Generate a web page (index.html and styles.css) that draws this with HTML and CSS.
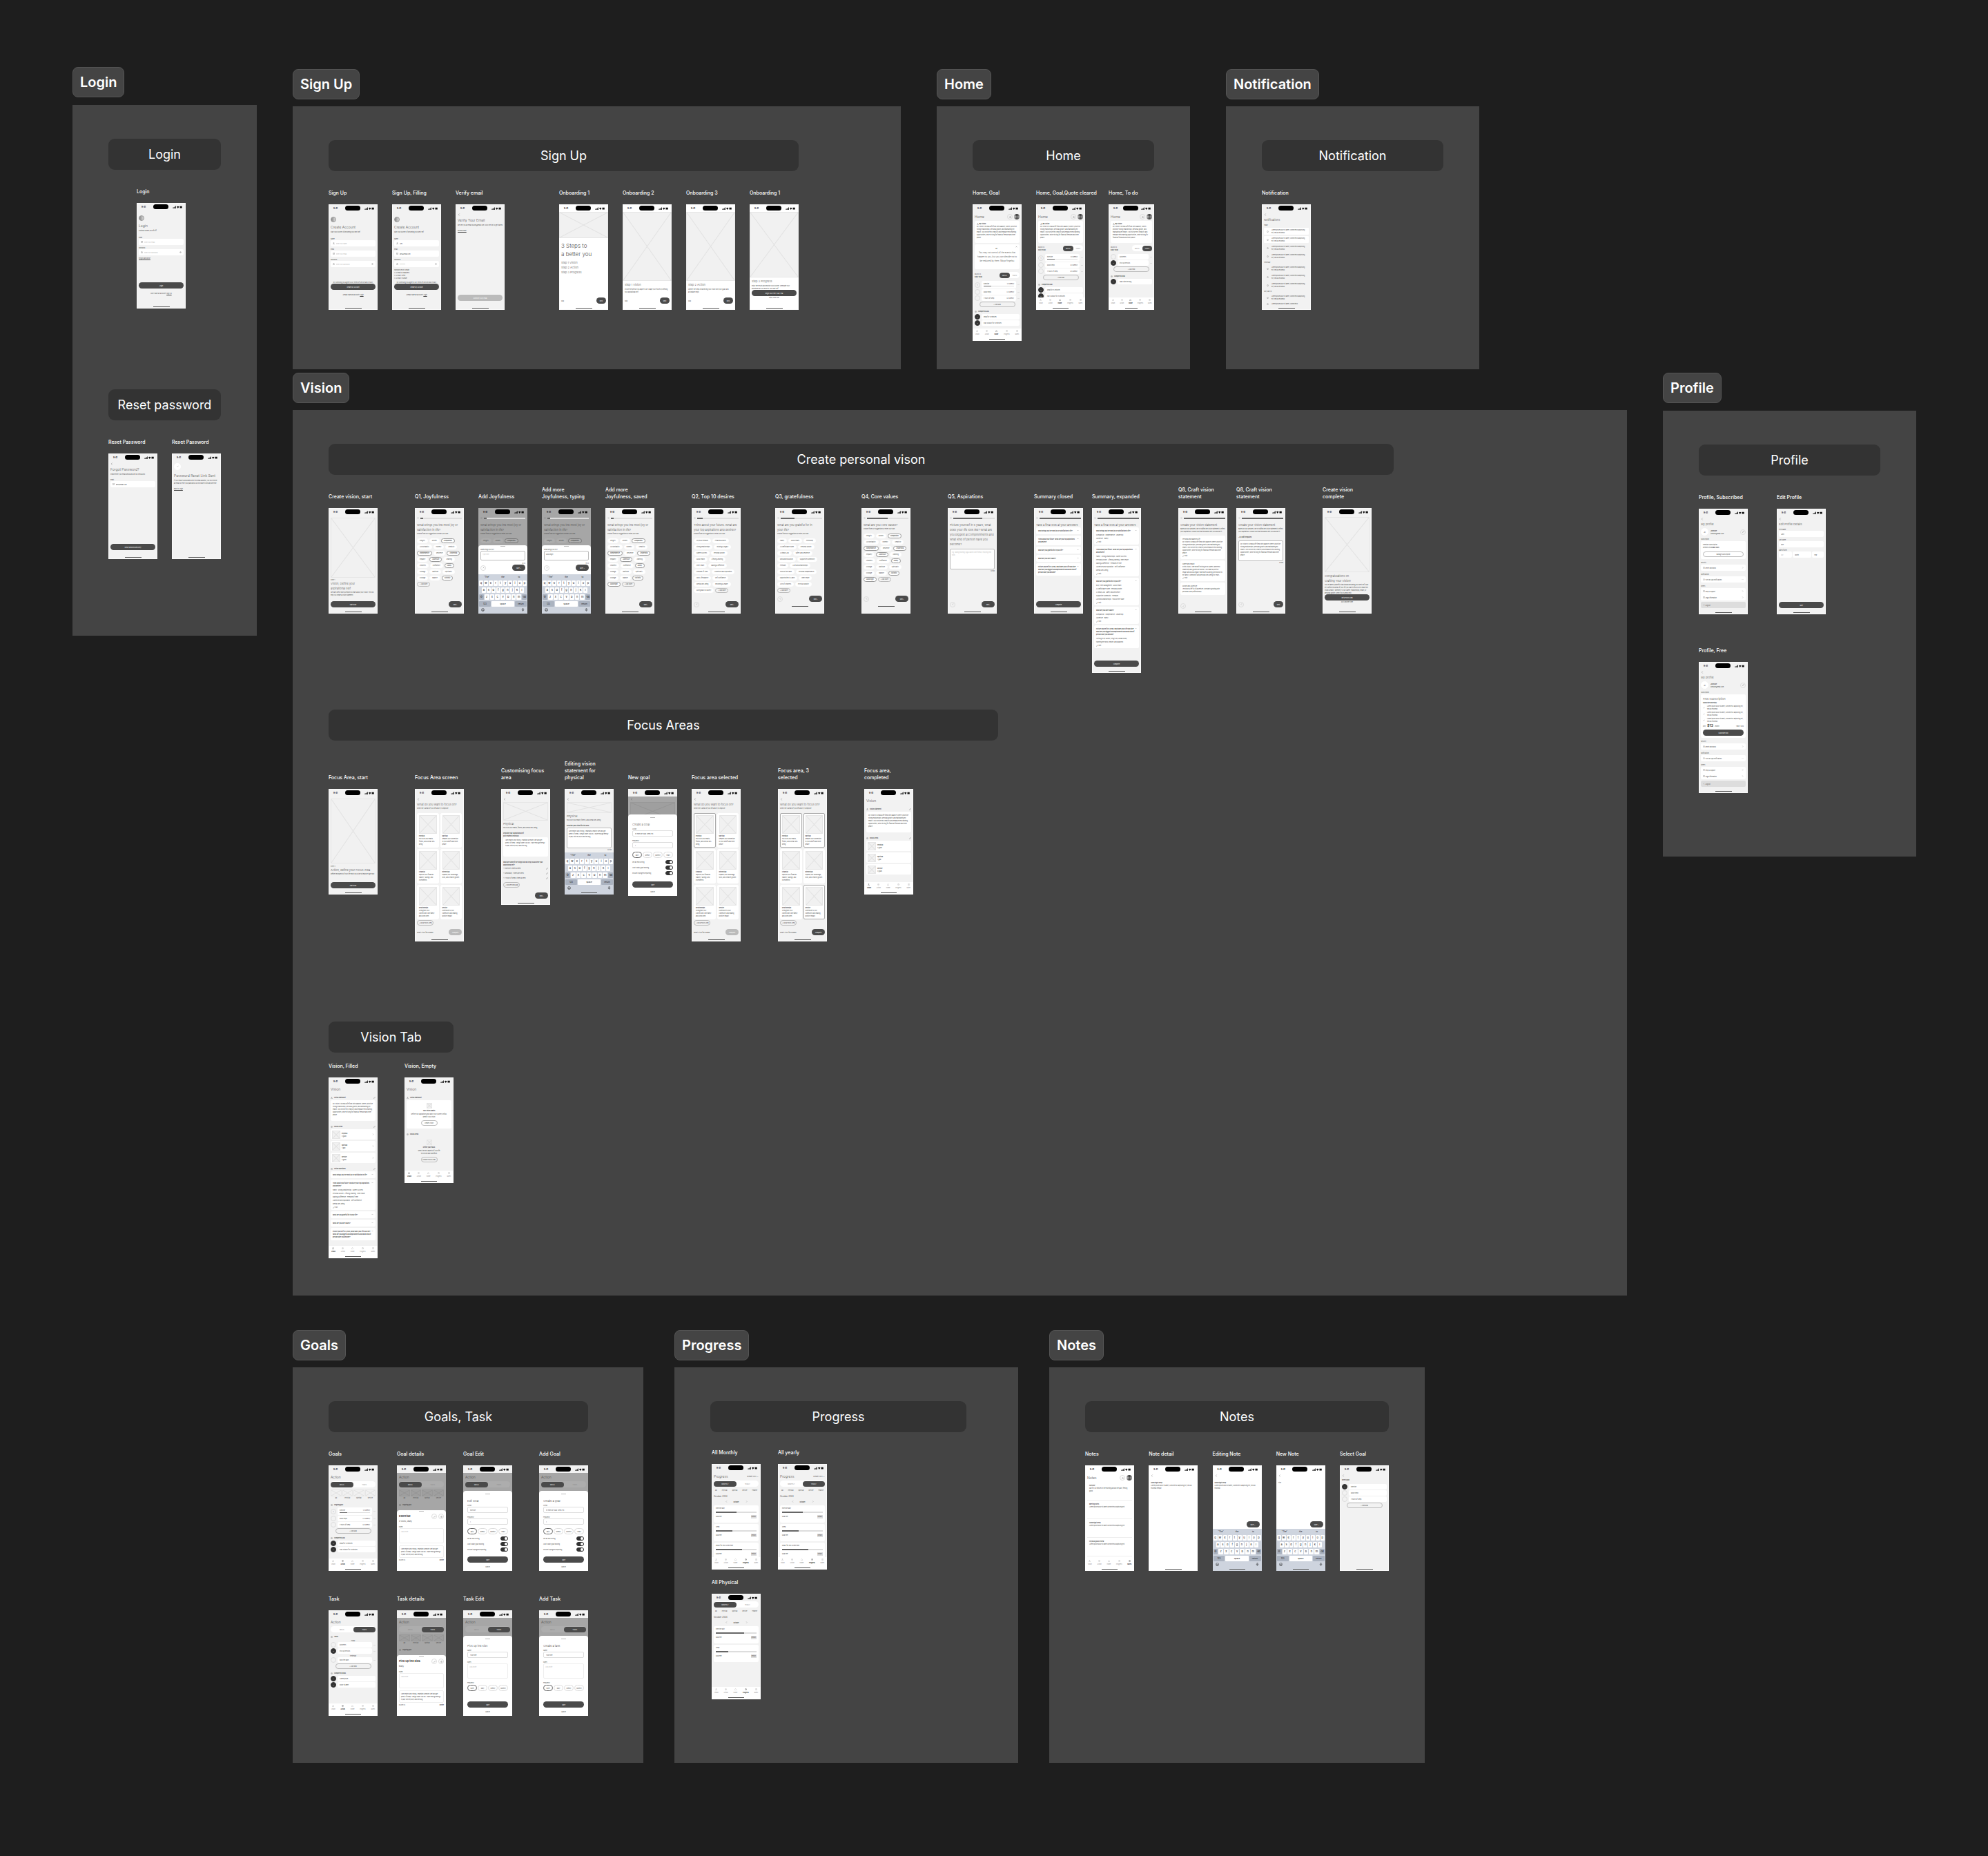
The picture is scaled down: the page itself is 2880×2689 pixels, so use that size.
FILE: index.html
```html
<!DOCTYPE html>
<html lang="en">
<head>
    <meta charset="UTF-8">
    <meta name="viewport" content="width=device-width, initial-scale=1.0">
    <title>App Wireframes</title>
    <link rel="stylesheet" href="styles.css">
</head>
<body>
    <!-- icon sprite -->
    <svg class="sprite" aria-hidden="true">
        <symbol id="i-signal" viewBox="0 0 28 8"><path fill="#111" d="M0 5h1.6v3H0zM2.4 4H4v4H2.4zM4.8 2.5h1.6V8H4.800zM7.2 1h1.6v7H7.2zM11 3.2a5.4 5.4 0 0 1 7 0L14.500 8zM20 1.500h6.500v5.500H20z"/></symbol>
        <symbol id="i-user" viewBox="0 0 24 24"><circle cx="12" cy="7" r="4"/><path d="M4 21c0-5 4-8 8-8s8 3 8 8z"/></symbol>
        <symbol id="i-mail" viewBox="0 0 24 24"><path d="M2 5h20v14H2zM2 6l10 8 10-8"/></symbol>
        <symbol id="i-lock" viewBox="0 0 24 24"><path d="M5 10h14v11H5zM8 10V6a4 4 0 0 1 8 0v4"/></symbol>
        <symbol id="i-eye" viewBox="0 0 24 24"><path d="M1 12s4-7 11-7 11 7 11 7-4 7-11 7S1 12 1 12z"/><circle cx="12" cy="12" r="3"/></symbol>
        <symbol id="i-back" viewBox="0 0 24 24"><path d="M16 3l-9 9 9 9"/></symbol>
        <symbol id="i-next" viewBox="0 0 24 24"><path d="M8 3l9 9-9 9"/></symbol>
        <symbol id="i-down" viewBox="0 0 24 24"><path d="M4 8l8 8 8-8"/></symbol>
        <symbol id="i-close" viewBox="0 0 24 24"><path d="M5 5l14 14M19 5L5 19"/></symbol>
        <symbol id="i-check" viewBox="0 0 24 24"><path d="M4 12l6 6L20 6"/></symbol>
        <symbol id="i-bell" viewBox="0 0 24 24"><path d="M5 18V11a7 7 0 0 1 14 0v7zM9 21h6"/></symbol>
        <symbol id="i-edit" viewBox="0 0 24 24"><path d="M4 20l2-6L18 2l4 4L10 18z"/></symbol>
        <symbol id="i-more" viewBox="0 0 24 24"><path d="M2 12h4M10 12h4M18 12h4"/></symbol>
        <symbol id="i-trash" viewBox="0 0 24 24"><path d="M6 7h12v14H6zM3 7h18M9 3h6"/></symbol>
        <symbol id="i-vision" viewBox="0 0 24 24"><circle cx="12" cy="5" r="3"/><path d="M3 21l6-10h5l7 10z"/></symbol>
        <symbol id="i-action" viewBox="0 0 24 24"><circle cx="12" cy="12" r="9"/><circle cx="12" cy="12" r="3"/></symbol>
        <symbol id="i-home" viewBox="0 0 24 24"><path d="M3 12l9-9 9 9v9H3z"/></symbol>
        <symbol id="i-progress" viewBox="0 0 24 24"><circle cx="12" cy="12" r="9"/><path d="M12 3v9h9"/></symbol>
        <symbol id="i-notes" viewBox="0 0 24 24"><path d="M5 3h14v18H5zM9 9h6M9 14h6"/></symbol>
        <symbol id="i-help" viewBox="0 0 24 24"><circle cx="12" cy="12" r="10"/><path d="M9 9a3 3 0 1 1 3 4v3"/></symbol>
        <symbol id="i-mic" viewBox="0 0 24 24"><path d="M9 3h6v11H9zM5 11a7 7 0 0 0 14 0M12 18v4"/></symbol>
        <symbol id="i-smile" viewBox="0 0 24 24"><circle cx="12" cy="12" r="10"/><path d="M6 13a6 6 0 0 0 12 0zM8 8h1M15 8h1"/></symbol>
    </svg>

    <main class="canvas">
        <div class="column">
            <section class="area">
                <h2 class="tag">Login</h2>
                <div class="board board-login">
                    <h3 class="bar">Login</h3>
                    <div class="row row-login">
                        <article class="frame">
                            <h4>Login</h4>
                            <div class="screen">
                                <div class="body">
                                    <i class="logo"></i>
                                    <p class="title">Login</p>
                                    <p>Continue where you left off</p>
                                    <label class="first">Email <span class="field"><svg><use href="#i-mail"/></svg><input type="email" placeholder="Enter your email"></span></label>
                                    <label>Password <span class="field"><svg><use href="#i-lock"/></svg><input type="password" placeholder="Enter your password"><svg><use href="#i-eye"/></svg></span></label>
                                    <a href="#">Forgot password?</a>
                                    <button class="btn push">Login</button>
                                    <p class="under">Don't have an account? <a href="#">Sign Up</a></p>
                                </div>
                            </div>
                        </article>
                    </div>
                    <h3 class="bar bar-next">Reset password</h3>
                    <div class="row">
                        <div class="group">
                            <article class="frame">
                                <h4>Reset Password</h4>
                                <div class="screen">
                                    <div class="body">
                                        <svg class="back"><use href="#i-back"/></svg>
                                        <p class="title">Forgot Password?</p>
                                        <p>Please enter your email below and we will send a link</p>
                                        <label class="gap-top">Email <span class="field"><svg><use href="#i-mail"/></svg><input type="email" value="alex@email.com"></span></label>
                                        <button class="btn push">Send Password Recovery</button>
                                    </div>
                                </div>
                            </article>
                            <article class="frame">
                                <h4>Reset Password</h4>
                                <div class="screen">
                                    <div class="body">
                                        <i class="done"><svg><use href="#i-check"/></svg></i>
                                        <p class="title">Password Reset Link Sent</p>
                                        <p>If your email is associated with this email address, you will receive an email to reset your password. Do not share it with anyone else.</p>
                                        <a class="gap-top" href="#">Back to Login</a>
                                    </div>
                                </div>
                            </article>
                        </div>
                    </div>
                </div>
            </section>
        </div>

        <div class="column column-main">
            <div class="areas">
                <section class="area">
                    <h2 class="tag">Sign Up</h2>
                    <div class="board board-signup">
                        <h3 class="bar">Sign Up</h3>
                        <div class="row row-split">
                            <div class="group">
                                <article class="frame">
                                    <h4>Sign Up</h4>
                                    <div class="screen">
                                        <div class="body">
                                            <i class="logo"></i>
                                            <p class="title">Create Account</p>
                                            <p>Start your journey of becoming your best self</p>
                                            <label class="first">Name <span class="field"><svg><use href="#i-user"/></svg><input type="text" placeholder="Enter your name"></span></label>
                                            <label>Email <span class="field"><svg><use href="#i-mail"/></svg><input type="email" placeholder="Enter your email"></span></label>
                                            <label>Password <span class="field"><svg><use href="#i-lock"/></svg><input type="password" placeholder="Enter your password"><svg><use href="#i-eye"/></svg></span></label>
                                            <p class="push center nowrap">By continuing you agree to our <a href="#">Terms of Service</a> and <a href="#">Privacy</a></p>
                                            <button class="btn">Create My Account</button>
                                            <p class="under">Already have an account? <a href="#">Login</a></p>
                                        </div>
                                    </div>
                                </article>
                                <article class="frame">
                                    <h4>Sign Up, Filling</h4>
                                    <div class="screen">
                                        <div class="body">
                                            <i class="logo"></i>
                                            <p class="title">Create Account</p>
                                            <p>Start your journey of becoming your best self</p>
                                            <label class="first">Name <span class="field"><svg><use href="#i-user"/></svg><input type="text" value="Alex"></span></label>
                                            <label>Email <span class="field"><svg><use href="#i-mail"/></svg><input type="email" value="alex@email.com"></span></label>
                                            <label>Password <span class="field"><svg><use href="#i-lock"/></svg><input type="text" value="********"><svg><use href="#i-eye"/></svg></span></label>
                                            <p>Password must contain<br>&#9745; At least 8 characters<br>&#9745; At least 1 letter<br>&#9745; At least 1 number</p>
                                            <p class="push center nowrap">By continuing you agree to our <a href="#">Terms of Service</a> and <a href="#">Privacy</a></p>
                                            <button class="btn">Create My Account</button>
                                            <p class="under">Already have an account? <a href="#">Login</a></p>
                                        </div>
                                    </div>
                                </article>
                                <article class="frame">
                                    <h4>Verify email</h4>
                                    <div class="screen">
                                        <div class="body">
                                            <svg class="back"><use href="#i-back"/></svg>
                                            <p class="title">Verify Your Email</p>
                                            <p>We sent you an email to alex@email.com. Click the link to get started</p>
                                            <a class="gap-top" href="#">Resend Email</a>
                                            <button class="btn btn-off push">Continue to My Email</button>
                                        </div>
                                    </div>
                                </article>
                            </div>
                            <div class="group">
                                <article class="frame">
                                    <h4>Onboarding 1</h4>
                                    <div class="screen white">
                                        <div class="photo photo-short"></div>
                                        <div class="body snug">
                                            <p class="hero">3 Steps to<br>a better you</p>
                                            <p class="steps">Step 1 Vision<br>Step 2 Action<br>Step 3 Progress</p>
                                            <div class="nav push"><a class="plain" href="#">Skip</a><button class="pill">Next</button></div>
                                        </div>
                                    </div>
                                </article>
                                <article class="frame">
                                    <h4>Onboarding 2</h4>
                                    <div class="screen white">
                                        <div class="photo photo-tall"></div>
                                        <div class="body snug">
                                            <p class="step">Step 1 Vision</p>
                                            <p>Picture the person you aspire to be. Shape your future by defining your aspirational self</p>
                                            <div class="nav push"><a class="plain" href="#">Skip</a><button class="pill">Next</button></div>
                                        </div>
                                    </div>
                                </article>
                                <article class="frame">
                                    <h4>Onboarding 3</h4>
                                    <div class="screen white">
                                        <div class="photo photo-tall"></div>
                                        <div class="body snug">
                                            <p class="step">Step 2 Action</p>
                                            <p>Identify the steps of achieving your vision with your goals and actionable steps</p>
                                            <div class="nav push"><a class="plain" href="#">Skip</a><button class="pill">Next</button></div>
                                        </div>
                                    </div>
                                </article>
                                <article class="frame">
                                    <h4>Onboarding 1</h4>
                                    <div class="screen white">
                                        <div class="photo photo-mid"></div>
                                        <div class="body snug">
                                            <p class="step">Step 3 Progress</p>
                                            <p>Enjoy the results and monitor your journey. Celebrate your milestones as you move to your best self</p>
                                            <button class="btn">Begin Your Free 7 Day Trial</button>
                                            <p class="center">Enjoy Free user</p>
                                        </div>
                                    </div>
                                </article>
                            </div>
                        </div>
                    </div>
                </section>

                <section class="area">
                    <h2 class="tag">Home</h2>
                    <div class="board board-home">
                        <h3 class="bar">Home</h3>
                        <div class="row">
                            <div class="group">
                                <article class="frame">
                                    <h4>Home, Goal</h4>
                                    <div class="screen screen-198" data-tab="Home">
                                        <div class="body">
                                            <div class="head"><p class="title">Home</p><i class="round"><svg><use href="#i-bell"/></svg></i><i class="avatar"></i></div>
                                            <div class="card vision"><b><svg><use href="#i-vision"/></svg> My Vision</b><p data-text="vision"></p></div>
                                            <div class="card quote"><svg><use href="#i-close"/></svg><i>&ldquo;</i><p>You may not control all the events that happen to you, but you can decide not to be reduced by them. Maya Angelou</p></div>
                                            <div class="day"><p>06/03/24<br><b>Daily To do</b></p><div class="switch"><button class="on">GOALS</button><button>TASKS</button></div></div>
                                            <div data-list="goals"></div>
                                        </div>
                                    </div>
                                </article>
                                <article class="frame">
                                    <h4>Home, Goal,Quote cleared</h4>
                                    <div class="screen" data-tab="Home">
                                        <div class="body">
                                            <div class="head"><p class="title">Home</p><i class="round"><svg><use href="#i-bell"/></svg></i><i class="avatar"></i></div>
                                            <div class="card vision"><b><svg><use href="#i-vision"/></svg> My Vision</b><p data-text="vision"></p></div>
                                            <div class="day"><p>06/03/24<br><b>Daily To do</b></p><div class="switch"><button class="on">GOALS</button><button>TASKS</button></div></div>
                                            <div data-list="goals"></div>
                                        </div>
                                    </div>
                                </article>
                            </div>
                            <article class="frame frame-todo">
                                <h4>Home, To do</h4>
                                <div class="screen" data-tab="Home">
                                    <div class="body">
                                        <div class="head"><p class="title">Home</p><i class="round"><svg><use href="#i-bell"/></svg></i><i class="avatar"></i></div>
                                        <div class="card vision"><b><svg><use href="#i-vision"/></svg> My Vision</b><p data-text="vision"></p></div>
                                        <div class="day"><p>06/03/24<br><b>Daily To do</b></p><div class="switch"><button>GOALS</button><button class="on">TASKS</button></div></div>
                                        <ul class="todo">
                                            <li><i></i><span>Groceries</span><svg><use href="#i-more"/></svg></li>
                                            <li class="ok"><i></i><span>Pick up the kids</span><svg><use href="#i-more"/></svg></li>
                                        </ul>
                                        <button class="add">+ Add Task</button>
                                        <b class="sub"><svg><use href="#i-action"/></svg> Completed Task</b>
                                        <ul class="todo wide">
                                            <li class="ok"><i></i><span>Walk with the dog</span></li>
                                        </ul>
                                    </div>
                                </div>
                            </article>
                        </div>
                    </div>
                </section>

                <section class="area">
                    <h2 class="tag">Notification</h2>
                    <div class="board board-home">
                        <h3 class="bar">Notification</h3>
                        <div class="row">
                            <article class="frame">
                                <h4>Notification</h4>
                                <div class="screen">
                                    <div class="body clip">
                                        <svg class="back"><use href="#i-back"/></svg>
                                        <p class="step step-page">Notifications</p>
                                        <ul class="alerts">
                                            <li class="day-name">Today</li>
                                            <li class="new"><svg><use href="#i-bell"/></svg>Lorem ipsum dolor sit amet, consectetur adipiscing elit, sed do eiusmod</li>
                                            <li class="new"><svg><use href="#i-bell"/></svg>Lorem ipsum dolor sit amet, consectetur adipiscing elit, sed do eiusmod</li>
                                            <li><svg><use href="#i-bell"/></svg>Lorem ipsum dolor sit amet, consectetur adipiscing elit, sed do eiusmod</li>
                                            <li><svg><use href="#i-bell"/></svg>Lorem ipsum dolor sit amet, consectetur adipiscing elit, sed do eiusmod</li>
                                            <li class="day-name">Yesterday</li>
                                            <li><svg><use href="#i-bell"/></svg>Lorem ipsum dolor sit amet, consectetur adipiscing elit, sed do eiusmod</li>
                                            <li><svg><use href="#i-bell"/></svg>Lorem ipsum dolor sit amet, consectetur adipiscing elit, sed do eiusmod</li>
                                            <li><svg><use href="#i-bell"/></svg>Lorem ipsum dolor sit amet, consectetur adipiscing elit, sed do eiusmod</li>
                                            <li class="day-name">Sun, Mar 24</li>
                                            <li><svg><use href="#i-bell"/></svg>Lorem ipsum dolor sit amet, consectetur adipiscing elit, sed do eiusmod</li>
                                            <li class="last"><svg><use href="#i-bell"/></svg>Lorem ipsum dolor sit amet, consectetur</li>
                                        </ul>
                                    </div>
                                </div>
                            </article>
                        </div>
                    </div>
                </section>
            </div>

            <section class="area area-vision">
                <h2 class="tag">Vision</h2>
                <div class="board board-vision">
                    <h3 class="bar bar-create">Create personal vison</h3>
                    <div class="row row-two">
                        <article class="frame">
                            <h4>Create vision, start</h4>
                            <div class="screen">
                                <div class="body snug">
                                    <div class="photo photo-box"></div>
                                    <p>STEP 1</p>
                                    <p class="question">Vision, Define your<br>aspirational self</p>
                                    <p>We have a few short questions to learn about your vision. This will help you create a vision statement.</p>
                                    <button class="btn push">Start Now</button>
                                </div>
                            </div>
                        </article>
                        <div class="group">
                            <article class="frame">
                                <h4>Q1, Joyfulness</h4>
                                <div class="screen">
                                    <div class="body snug">
                                        <div class="track"><svg><use href="#i-close"/></svg><progress max="100" value="6"></progress></div>
                                        <p class="question">What brings you the most joy or satisfaction in life?</p>
                                        <p>Choose from our suggestions or enter your own</p>
                                        <ul class="chips" data-set="values"></ul>
                                        <div class="nav push"><span></span><button class="pill pill-wide">Next &rsaquo;</button></div>
                                    </div>
                                </div>
                            </article>
                            <article class="frame">
                                <h4>Add Joyfulness</h4>
                                <div class="screen dim">
                                    <div class="body clip">
                                        <div class="track"><svg><use href="#i-close"/></svg><progress max="100" value="6"></progress></div>
                                        <p class="question">What brings you the most joy or satisfaction in life?</p>
                                        <p>Choose from our suggestions or enter your own</p>
                                        <ul class="chips"><li>Integrity</li><li>Growth</li><li class="on">Compassion</li></ul>
                                    </div>
                                    <div class="sheet sheet-add">
                                        <i class="grip"></i>
                                        <label>What brings you joy? <textarea placeholder="Type here"></textarea></label>
                                        <p class="right">0/24</p>
                                        <div class="nav"><i class="round"><svg><use href="#i-close"/></svg></i><button class="pill pill-wide">Save &#10003;</button></div>
                                    </div>
                                    <div class="keyboard"></div>
                                </div>
                            </article>
                            <article class="frame">
                                <h4>Add more<br>Joyfulness, typing</h4>
                                <div class="screen dim">
                                    <div class="body clip">
                                        <div class="track"><svg><use href="#i-close"/></svg><progress max="100" value="6"></progress></div>
                                        <p class="question">What brings you the most joy or satisfaction in life?</p>
                                        <p>Choose from our suggestions or enter your own</p>
                                        <ul class="chips"><li>Integrity</li><li>Growth</li><li class="on">Compassion</li></ul>
                                    </div>
                                    <div class="sheet sheet-add">
                                        <i class="grip"></i>
                                        <label>What brings you joy? <textarea>Good night</textarea></label>
                                        <p class="right">9/24</p>
                                        <div class="nav"><i class="round"><svg><use href="#i-close"/></svg></i><button class="pill pill-wide">Save &#10003;</button></div>
                                    </div>
                                    <div class="keyboard"></div>
                                </div>
                            </article>
                            <article class="frame">
                                <h4>Add more<br>Joyfulness, saved</h4>
                                <div class="screen">
                                    <div class="body snug">
                                        <div class="track"><svg><use href="#i-close"/></svg><progress max="100" value="6"></progress></div>
                                        <p class="question">What brings you the most joy or satisfaction in life?</p>
                                        <p>Choose from our suggestions or enter your own</p>
                                        <ul class="chips" data-set="values" data-extra="Good night"></ul>
                                        <div class="nav push"><span></span><button class="pill pill-wide">Next &rsaquo;</button></div>
                                    </div>
                                </div>
                            </article>
                        </div>
                        <div class="group group-50">
                            <article class="frame">
                                <h4>Q2, Top 10 desires</h4>
                                <div class="screen">
                                    <div class="body snug">
                                        <div class="track"><svg><use href="#i-close"/></svg><progress max="100" value="14"></progress></div>
                                        <p class="question">Think about your future. What are your top aspirations and desires?</p>
                                        <p>Choose from our suggestions or enter your own</p>
                                        <ul class="chips chips-wide" data-set="desires"></ul>
                                        <div class="nav push"><i class="round"><svg><use href="#i-back"/></svg></i><button class="pill pill-wide">Next &rsaquo;</button></div>
                                    </div>
                                </div>
                            </article>
                            <article class="frame">
                                <h4>Q3, gratefulness</h4>
                                <div class="screen raised">
                                    <div class="body snug">
                                        <div class="track"><svg><use href="#i-close"/></svg><progress max="100" value="33"></progress></div>
                                        <p class="question">What are you grateful for in<br>your life?</p>
                                        <p>Choose from our suggestions or enter your own</p>
                                        <ul class="chips" data-set="grateful"></ul>
                                        <div class="nav push"><i class="round"><svg><use href="#i-back"/></svg></i><button class="pill pill-wide">Next &rsaquo;</button></div>
                                    </div>
                                </div>
                            </article>
                        </div>
                        <article class="frame">
                            <h4>Q4, Core values</h4>
                            <div class="screen raised">
                                <div class="body snug">
                                    <div class="track"><svg><use href="#i-close"/></svg><progress max="100" value="50"></progress></div>
                                    <p class="question">What are you core values?</p>
                                    <p>Choose from our suggestions or enter your own</p>
                                    <ul class="chips" data-set="values" data-extra="Good night"></ul>
                                    <div class="nav push"><i class="round"><svg><use href="#i-back"/></svg></i><button class="pill pill-wide">Next &rsaquo;</button></div>
                                </div>
                            </div>
                        </article>
                        <article class="frame">
                            <h4>Q5, Aspirations</h4>
                            <div class="screen">
                                <div class="body snug">
                                    <div class="track"><svg><use href="#i-close"/></svg><progress max="100" value="70"></progress></div>
                                    <p class="question">Picture yourself in 5 years, what does your life look like? What are you biggest accomplishments and what kind of person have you become?</p>
                                    <textarea class="essay" aria-label="Answer" placeholder="E.g. Taking morning yoga classes with friends, enjoying new skills"></textarea>
                                    <p class="right">0/500</p>
                                    <div class="nav push"><i class="round"><svg><use href="#i-back"/></svg></i><button class="pill pill-wide">Next &rsaquo;</button></div>
                                </div>
                            </div>
                        </article>
                        <div class="group group-14">
                            <article class="frame">
                                <h4>Summary closed</h4>
                                <div class="screen">
                                    <div class="body snug">
                                        <div class="track"><svg><use href="#i-close"/></svg><progress max="100" value="100"></progress></div>
                                        <p class="question">Take a final look at your answers</p>
                                        <div data-answers=""></div>
                                        <button class="btn push">Complete</button>
                                    </div>
                                </div>
                            </article>
                            <article class="frame">
                                <h4>Summary, expanded</h4>
                                <div class="screen screen-239">
                                    <div class="body snug">
                                        <div class="track"><svg><use href="#i-close"/></svg><progress max="100" value="100"></progress></div>
                                        <p class="question">Take a final look at your answers</p>
                                        <div data-answers="0 1 2 3 4"></div>
                                        <button class="btn push">Complete</button>
                                    </div>
                                </div>
                            </article>
                        </div>
                        <div class="group group-14">
                            <article class="frame">
                                <h4>Q8, Craft vision<br>statement</h4>
                                <div class="screen">
                                    <div class="body snug clip">
                                        <div class="track"><svg><use href="#i-close"/></svg><progress max="100" value="100"></progress></div>
                                        <p class="question">Create your vision statement</p>
                                        <p>Based on your answers, we've crafted the vision statement to reflect your aspirations. Choose one that resonates with you and edit it.</p>
                                        <div class="stack">
                                            <div class="card"><em>Personal and Balanced Life</em><p data-text="vision"></p><p><svg><use href="#i-edit"/></svg> Edit</p></div>
                                            <div class="card"><em>Career and Impact</em><p>In this vision, I see myself thriving in my career, where my leadership and growth are valued. I will make a positive impact and build a legacy that leaves a lasting contribution to my family, community and personal well-being for years.</p><p><svg><use href="#i-edit"/></svg> Edit</p></div>
                                            <div class="card"><em>Growth and Adventure</em><p>I envision a life full of adventure, constantly growing both personally and professionally.</p></div>
                                        </div>
                                        <div class="nav push"><i class="round"><svg><use href="#i-back"/></svg></i></div>
                                    </div>
                                </div>
                            </article>
                            <article class="frame">
                                <h4>Q8, Craft vision<br>statement</h4>
                                <div class="screen">
                                    <div class="body snug">
                                        <div class="track"><svg><use href="#i-close"/></svg><progress max="100" value="100"></progress></div>
                                        <p class="question">Create your vision statement</p>
                                        <p>Based on your answers, we've crafted the vision statement to reflect your aspirations. Choose one that resonates with you and edit it.</p>
                                        <p class="gap-top"><b>&lsaquo; All draft templates</b></p>
                                        <textarea class="essay" aria-label="Vision" data-text="vision"></textarea>
                                        <p class="right">0/500</p>
                                        <div class="nav push"><i class="round"><svg><use href="#i-back"/></svg></i><button class="pill">Next</button></div>
                                    </div>
                                </div>
                            </article>
                        </div>
                        <article class="frame">
                            <h4>Create vision<br>complete</h4>
                            <div class="screen">
                                <div class="body snug">
                                    <div class="photo photo-done"></div>
                                    <p class="question">Congratulations on<br>Crafting Your Vision!</p>
                                    <p>You've taken a powerful step toward becoming your best self. Now let's define the areas of your life you want to focus on to make this vision a reality, whether it's your career, relationships, health, or personal growth. Select focus areas next.</p>
                                    <button class="btn">Set a Focus Area</button>
                                    <p class="center">Do it another time</p>
                                </div>
                            </div>
                        </article>
                    </div>

                    <h3 class="bar bar-focus">Focus Areas</h3>
                    <div class="row row-three">
                        <article class="frame">
                            <h4>Focus Area, start</h4>
                            <div class="screen">
                                <div class="body snug">
                                    <div class="photo photo-start"></div>
                                    <p>STEP 2</p>
                                    <p class="question nowrap-text">Action, define your Focus Area</p>
                                    <p>Define the aspects of your life most you'd like to improve right now</p>
                                    <button class="btn push">Start Now</button>
                                </div>
                            </div>
                        </article>
                        <article class="frame">
                            <h4>Focus Area screen</h4>
                            <div class="screen screen-220" data-focus=""></div>
                        </article>
                        <div class="group">
                            <article class="frame">
                                <h4>Customising focus<br>area</h4>
                                <div class="screen screen-168">
                                    <div class="body snug">
                                        <svg class="back"><use href="#i-back"/></svg>
                                        <div class="photo photo-thumb"></div>
                                        <p class="question">Physical</p>
                                        <p>Focus on your health, fitness, and overall well-being</p>
                                        <p class="gap-top"><b>Describe your aspirational self<br>as it relates to Physical</b></p>
                                        <div class="card note" data-text="physical"></div>
                                        <p class="gap-top"><b>What are some of the things that will help you achieve your aspirational self?</b></p>
                                        <ul class="steps-list"><li><span>&#9744; Exercise 3 times a week</span><svg><use href="#i-edit"/></svg></li><li><span>&#9744; Meditation, 7 times per week</span><svg><use href="#i-edit"/></svg></li><li><span>&#9744; 7 hours of sleep 5 times a week</span><svg><use href="#i-edit"/></svg></li></ul>
                                        <button class="add add-small">+ Add personal goal</button>
                                        <div class="nav push"><span></span><button class="pill pill-wide">Next &rsaquo;</button></div>
                                    </div>
                                </div>
                            </article>
                            <article class="frame">
                                <h4>Editing vision<br>statement for<br>physical</h4>
                                <div class="screen keyed">
                                    <div class="body clip">
                                        <svg class="back"><use href="#i-back"/></svg>
                                        <div class="photo photo-slim"></div>
                                        <p class="question">Physical</p>
                                        <p>Focus on your health, fitness, and overall well-being</p>
                                        <p class="gap-top"><b>Describe your vision for this area</b></p>
                                        <textarea class="essay essay-tight" aria-label="Vision" data-text="physical"></textarea>
                                        <p class="right">0/200</p>
                                    </div>
                                    <div class="keyboard"></div>
                                </div>
                            </article>
                            <article class="frame">
                                <h4>New goal</h4>
                                <div class="screen screen-155 dim lit">
                                    <div class="body clip">
                                        <svg class="back"><use href="#i-back"/></svg>
                                        <div class="photo photo-thumb"></div>
                                    </div>
                                    <div class="sheet sheet-goal" data-form="Create a Goal" data-value="ie: exercise, walk, sleep, etc."></div>
                                </div>
                            </article>
                            <article class="frame">
                                <h4>Focus area selected</h4>
                                <div class="screen screen-220" data-focus="Physical"></div>
                            </article>
                        </div>
                        <article class="frame">
                            <h4>Focus area, 3<br>selected</h4>
                            <div class="screen screen-220" data-focus="Physical Spiritual Service"></div>
                        </article>
                        <article class="frame">
                            <h4>Focus area,<br>completed</h4>
                            <div class="screen" data-tab="Vision">
                                <div class="body">
                                    <p class="title title-top">Vision</p>
                                    <b class="sub"><svg><use href="#i-vision"/></svg> Vision Statement <svg><use href="#i-edit"/></svg></b>
                                    <div class="card vision"><p data-text="vision"></p></div>
                                    <b class="sub"><svg><use href="#i-action"/></svg> Focus Areas <svg><use href="#i-edit"/></svg></b>
                                    <div class="card focus"><i class="photo"></i><p><b>Physical</b><br>3 goals</p></div>
                                    <div class="card focus"><i class="photo"></i><p><b>Spiritual</b><br>1 goal</p></div>
                                    <div class="card focus"><i class="photo"></i><p><b>Service</b><br>3 goals</p></div>
                                </div>
                            </div>
                        </article>
                    </div>

                    <h3 class="bar bar-tab">Vision Tab</h3>
                    <div class="row row-near">
                        <article class="frame">
                            <h4>Vision, Filled</h4>
                            <div class="screen screen-262" data-tab="Vision">
                                <div class="body">
                                    <p class="title title-top">Vision</p>
                                    <b class="sub"><svg><use href="#i-vision"/></svg> Vision Statement <svg><use href="#i-edit"/></svg></b>
                                    <div class="card vision"><p data-text="vision"></p></div>
                                    <b class="sub"><svg><use href="#i-action"/></svg> Focus Areas <svg><use href="#i-edit"/></svg></b>
                                    <div class="card focus"><i class="photo"></i><p><b>Physical</b><br>3 goals</p><svg><use href="#i-next"/></svg></div>
                                    <div class="card focus"><i class="photo"></i><p><b>Spiritual</b><br>1 goal</p><svg><use href="#i-next"/></svg></div>
                                    <div class="card focus"><i class="photo"></i><p><b>Service</b><br>3 goals</p><svg><use href="#i-next"/></svg></div>
                                    <b class="sub"><svg><use href="#i-help"/></svg> Vision Questions <svg><use href="#i-edit"/></svg></b>
                                    <div data-answers="1"></div>
                                </div>
                            </div>
                        </article>
                        <article class="frame">
                            <h4>Vision, Empty</h4>
                            <div class="screen" data-tab="Vision">
                                <div class="body">
                                    <p class="title title-top">Vision</p>
                                    <b class="sub"><svg><use href="#i-vision"/></svg> Vision Statement</b>
                                    <div class="card empty"><i class="photo"></i><b>Your vision awaits</b><p>Define your aspirations and watch your journey unfold. Identify your vision</p><button class="add add-small">Create Vision</button></div>
                                    <b class="sub"><svg><use href="#i-action"/></svg> Focus Areas</b>
                                    <div class="empty"><i class="photo"></i><b>Define your focus</b><p>Select the key aspects of your life<br>to nurture and transform</p><button class="add add-small">Choose Focus Area</button></div>
                                </div>
                            </div>
                        </article>
                    </div>
                </div>
            </section>

            <div class="areas areas-last">
                <section class="area">
                    <h2 class="tag">Goals</h2>
                    <div class="board board-goals">
                        <h3 class="bar">Goals, Task</h3>
                        <div class="row row-goals">
                            <article class="frame">
                                <h4>Goals</h4>
                                <div class="screen" data-tab="Action">
                                    <div class="body">
                                        <p class="title title-top">Action</p>
                                        <div class="switch switch-full"><button class="on">GOALS</button><button>TASKS</button></div>
                                        <div class="thumbs"><p><i class="photo"></i><b>All</b></p><p><i class="photo"></i>Physical</p><p><i class="photo"></i>Spiritual</p><p><i class="photo"></i>Service</p></div>
                                        <b class="sub sub-flush"><svg><use href="#i-notes"/></svg> Ongoing goal</b>
                                        <div data-list="goals"></div>
                                    </div>
                                </div>
                            </article>
                            <article class="frame">
                                <h4>Goal details</h4>
                                <div class="screen dim lit">
                                    <div class="body clip">
                                        <p class="title title-top">Action</p>
                                        <div class="switch switch-full"><button class="on">GOALS</button><button>TASKS</button></div>
                                        <div class="thumbs"><p><i class="photo"></i><b>All</b></p><p><i class="photo"></i>Physical</p><p><i class="photo"></i>Spiritual</p><p><i class="photo"></i>Service</p></div>
                                        <b class="sub sub-flush"><svg><use href="#i-notes"/></svg> Ongoing goal</b>
                                    </div>
                                    <div class="sheet sheet-details">
                                        <i class="grip"></i>
                                        <div class="head"><b>Exercise</b><i class="round"><svg><use href="#i-edit"/></svg></i><i class="round"><svg><use href="#i-trash"/></svg></i></div>
                                        <p class="schedule">2 times, daily</p>
                                        <label>Notes <textarea placeholder="Add a note"></textarea></label>
                                        <p class="boxed" data-text="physical"></p>
                                        <div class="nav"><span>04/09/24</span><b>Delete</b></div>
                                    </div>
                                </div>
                            </article>
                            <article class="frame">
                                <h4>Goal Edit</h4>
                                <div class="screen dim lit">
                                    <div class="body clip">
                                        <p class="title title-top">Action</p>
                                        <div class="switch switch-full"><button class="on">GOALS</button><button>TASKS</button></div>
                                    </div>
                                    <div class="sheet sheet-goal" data-form="Edit Goal" data-value="Exercise"></div>
                                </div>
                            </article>
                            <article class="frame">
                                <h4>Add Goal</h4>
                                <div class="screen dim lit">
                                    <div class="body clip">
                                        <p class="title title-top">Action</p>
                                        <div class="switch switch-full"><button class="on">GOALS</button><button>TASKS</button></div>
                                    </div>
                                    <div class="sheet sheet-goal" data-form="Create a goal" data-value="ie: exercise, walk, sleep, etc."></div>
                                </div>
                            </article>
                        </div>
                        <div class="row row-goals row-second">
                            <article class="frame">
                                <h4>Task</h4>
                                <div class="screen" data-tab="Action">
                                    <div class="body">
                                        <p class="title title-top">Action</p>
                                        <div class="switch switch-full"><button>GOALS</button><button class="on">TASKS</button></div>
                                        <b class="sub"><svg><use href="#i-notes"/></svg> Tasks</b>
                                        <p class="center">Today</p>
                                        <ul class="todo">
                                            <li><i></i><span>Groceries</span><svg><use href="#i-more"/></svg></li>
                                            <li class="ok"><i></i><span>Pick up the kids</span><svg><use href="#i-more"/></svg></li>
                                        </ul>
                                        <p class="center">Yesterday</p>
                                        <ul class="todo">
                                            <li><i></i><span>Mow the lawn</span><svg><use href="#i-more"/></svg></li>
                                        </ul>
                                        <button class="add">+ Add Task</button>
                                        <b class="sub"><svg><use href="#i-action"/></svg> Completed Tasks</b>
                                        <ul class="todo wide">
                                            <li class="ok"><i></i><span>Lorem ipsum</span></li>
                                            <li class="ok"><i></i><span>Dolor sit amet</span></li>
                                        </ul>
                                    </div>
                                </div>
                            </article>
                            <article class="frame">
                                <h4>Task details</h4>
                                <div class="screen dim lit">
                                    <div class="body clip">
                                        <p class="title title-top">Action</p>
                                        <div class="switch switch-full"><button>GOALS</button><button class="on">TASKS</button></div>
                                        <div class="thumbs"><p><i class="photo"></i><b>All</b></p><p><i class="photo"></i>Physical</p><p><i class="photo"></i>Spiritual</p><p><i class="photo"></i>Service</p></div>
                                        <b class="sub sub-flush"><svg><use href="#i-notes"/></svg> Ongoing goal</b>
                                    </div>
                                    <div class="sheet sheet-details">
                                        <i class="grip"></i>
                                        <div class="head"><b>Pick up the kids</b><i class="round"><svg><use href="#i-edit"/></svg></i><i class="round"><svg><use href="#i-trash"/></svg></i></div>
                                        <p class="schedule">Daily</p>
                                        <label>Notes <textarea placeholder="Add a note"></textarea></label>
                                        <p class="boxed" data-text="physical"></p>
                                        <div class="nav"><span>04/09/24</span><b>Delete</b></div>
                                    </div>
                                </div>
                            </article>
                            <article class="frame">
                                <h4>Task Edit</h4>
                                <div class="screen dim lit">
                                    <div class="body clip">
                                        <p class="title title-top">Action</p>
                                        <div class="switch switch-full"><button>GOALS</button><button class="on">TASKS</button></div>
                                    </div>
                                    <div class="sheet sheet-goal" data-task="Pick up the kids"></div>
                                </div>
                            </article>
                            <article class="frame">
                                <h4>Add Task</h4>
                                <div class="screen dim lit">
                                    <div class="body clip">
                                        <p class="title title-top">Action</p>
                                        <div class="switch switch-full"><button>GOALS</button><button class="on">TASKS</button></div>
                                    </div>
                                    <div class="sheet sheet-goal" data-task="Create a task"></div>
                                </div>
                            </article>
                        </div>
                    </div>
                </section>

                <section class="area">
                    <h2 class="tag">Progress</h2>
                    <div class="board board-progress">
                        <h3 class="bar">Progress</h3>
                        <div class="row row-pair">
                            <article class="frame">
                                <h4>All Monthly</h4>
                                <div class="screen" data-tab="Progress" data-report="month"></div>
                            </article>
                            <article class="frame">
                                <h4>All yearly</h4>
                                <div class="screen" data-tab="Progress" data-report="year"></div>
                            </article>
                        </div>
                        <div class="row row-pair row-third">
                            <article class="frame">
                                <h4>All Physical</h4>
                                <div class="screen" data-tab="Progress" data-report="physical"></div>
                            </article>
                        </div>
                    </div>
                </section>

                <section class="area">
                    <h2 class="tag">Notes</h2>
                    <div class="board board-notes">
                        <h3 class="bar">Notes</h3>
                        <div class="row row-even">
                            <article class="frame">
                                <h4>Notes</h4>
                                <div class="screen white" data-tab="Notes">
                                    <div class="body">
                                        <div class="head"><p class="title">Notes</p><i class="round"><svg><use href="#i-bell"/></svg></i><i class="avatar"></i></div>
                                        <ul class="notes">
                                            <li><b>Exercise</b><br>Ran for 30 minutes in the morning around the park, feeling good</li>
                                            <li><b>Meeting notes</b><br>Lorem ipsum dolor sit amet consectetur adipiscing elit</li>
                                            <li><b>Good night sleep</b><br>Lorem ipsum dolor sit amet consectetur adipiscing elit</li>
                                            <li><b>Physical goals review</b><br>Lorem ipsum dolor sit amet consectetur adipiscing elit</li>
                                        </ul>
                                    </div>
                                </div>
                            </article>
                            <article class="frame">
                                <h4>Note detail</h4>
                                <div class="screen white">
                                    <div class="body">
                                        <svg class="back"><use href="#i-back"/></svg>
                                        <p class="gap-top"><b>Good night sleep</b></p>
                                        <p>Lorem ipsum dolor sit amet, consectetur adipiscing elit, sed do eiusmod tempor</p>
                                    </div>
                                </div>
                            </article>
                            <article class="frame">
                                <h4>Editing Note</h4>
                                <div class="screen white keyed">
                                    <div class="body snug">
                                        <svg class="back"><use href="#i-back"/></svg>
                                        <p class="gap-top"><b>Good night sleep</b></p>
                                        <p>Lorem ipsum dolor sit amet, consectetur adipiscing elit, sed do eiusmod</p>
                                        <div class="nav push"><span></span><button class="pill pill-wide">Save &#10003;</button></div>
                                    </div>
                                    <div class="keyboard"></div>
                                </div>
                            </article>
                            <article class="frame">
                                <h4>New Note</h4>
                                <div class="screen white keyed">
                                    <div class="body snug">
                                        <svg class="back"><use href="#i-back"/></svg>
                                        <p class="gap-top">Title</p>
                                        <div class="nav push"><span></span><button class="pill pill-wide">Save &#10003;</button></div>
                                    </div>
                                    <div class="keyboard"></div>
                                </div>
                            </article>
                            <article class="frame">
                                <h4>Select Goal</h4>
                                <div class="screen">
                                    <div class="body">
                                        <svg class="back"><use href="#i-back"/></svg>
                                        <p><b>Select goal</b></p>
                                        <ul class="todo wide gap-top">
                                            <li class="ok"><i></i><span>Exercise</span></li>
                                            <li><i></i><span>6000 steps</span></li>
                                            <li><i></i><span>7 hours of sleep</span></li>
                                        </ul>
                                        <button class="add">+ Add Goal</button>
                                    </div>
                                </div>
                            </article>
                        </div>
                    </div>
                </section>
            </div>
        </div>

        <div class="column column-profile">
            <section class="area">
                <h2 class="tag">Profile</h2>
                <div class="board board-profile">
                    <h3 class="bar">Profile</h3>
                    <div class="row">
                        <article class="frame">
                            <h4>Profile, Subscribed</h4>
                            <div class="screen">
                                <div class="body" data-profile="subscribed"></div>
                            </div>
                        </article>
                        <article class="frame frame-edit">
                            <h4>Edit Profile</h4>
                            <div class="screen">
                                <div class="body snug">
                                    <svg class="back"><use href="#i-back"/></svg>
                                    <p class="step step-page">Edit Profile Details</p>
                                    <label>First Name <span class="field"><input type="text" value="John"></span></label>
                                    <label>Last Name <span class="field"><input type="text" value="Doe"></span></label>
                                    <p>Date of birth</p>
                                    <div class="dates">
                                        <input class="field" type="text" aria-label="Day" placeholder="Day">
                                        <select class="field" aria-label="Month"><option>Month</option></select>
                                        <select class="field" aria-label="Year"><option>Year</option></select>
                                    </div>
                                    <button class="btn push">Save</button>
                                </div>
                            </div>
                        </article>
                    </div>
                    <div class="row row-free">
                        <article class="frame">
                            <h4>Profile, Free</h4>
                            <div class="screen screen-190">
                                <div class="body" data-profile="free"></div>
                            </div>
                        </article>
                    </div>
                </div>
            </section>
        </div>
    </main>
    <script src="script.js"></script>
</body>
</html>
```

FILE: styles.css
```css
:root {
  --canvas: #1e1e1e;
  --board: #444444;
  --bar: #333333;
  --screen: #f2f2f2;
  --ink: #4a4a4a;
}

* {
  box-sizing: border-box;
}

body {
  margin: 0;
  min-height: 100vh;
  background: var(--canvas);
  color: #fff;
  font-family: Inter, "Liberation Sans", sans-serif;
}

h2, h3, h4, p, ul {
  margin: 0;
  padding: 0;
  font-weight: inherit;
}

.sprite {
  position: absolute;
  width: 0;
  height: 0;
}

/* canvas */

.canvas {
  display: flex;
  align-items: flex-start;
  gap: 52px;
  padding: 97px 104px 133px 105px;
}

.column-main {
  flex: 1;
  padding-top: 3px;
}

.column-profile {
  padding-top: 443px;
}

.areas {
  display: flex;
  gap: 52px;
}

.areas-last {
  gap: 45px;
  margin-top: 50px;
}

.area {
  display: flex;
  flex-direction: column;
  align-items: flex-start;
}

.area-vision {
  margin-top: 5px;
}

.tag {
  height: 44px;
  margin-bottom: 11px;
  padding: 0 10px;
  border: 1px solid #555;
  border-radius: 8px;
  background: var(--board);
  font-size: 20px;
  line-height: 42px;
  font-weight: 600;
}

.areas .tag, .area-vision .tag { margin-bottom: 10px; }

.board {
  flex: 1;
  align-self: stretch;
  padding: 49px 52px 0;
  background: var(--board);
}

.board-login { padding-bottom: 111px; }
.board-signup { padding-right: 148px; padding-bottom: 86px; }
.board-home { width: 367px; padding-bottom: 40px; }
.board-vision { padding-bottom: 54px; }
.board-goals { padding-right: 80px; padding-bottom: 68px; }
.board-progress { padding-right: 75px; }
.board-progress .bar { width: 371px; }
.board-goals .bar { width: 376px; }
.board-notes .bar { width: 440px; }
.board-profile { width: 367px; padding-bottom: 92px; }

.bar {
  height: 45px;
  border-radius: 9px;
  background: var(--bar);
  font-size: 18px;
  line-height: 45px;
  text-align: center;
}

.bar-next { margin-top: 117px; }
.bar-create { width: 1543px; }
.bar-focus { width: 970px; margin-top: 53px; }
.bar-tab { width: 181px; margin-top: 116px; }

.row {
  display: flex;
  align-items: flex-start;
  padding-top: 27px;
}

.row-login { padding-left: 41px; }
.row-split { gap: 79px; }
.row-even { justify-content: space-between; }
.row-two { gap: 54px; padding-top: 17px; }
.row-three { gap: 54px; padding-top: 29px; }
.row-near { gap: 39px; padding-top: 15px; }
.row-pair { gap: 25px; padding-top: 25px; padding-left: 2px; }
.row-third { padding-top: 14px; }
.row-free { padding-top: 48px; }

.row-goals {
  display: grid;
  grid-template-columns: 99px 96px 110px 71px;
}

.row-second { padding-top: 36px; }

.group {
  display: flex;
  align-items: flex-start;
  gap: 21px;
}

.group-50 { gap: 50px; }
.group-14 { gap: 13px; }

.frame { width: 71px; }
.frame-todo { margin-left: 34px; }
.frame-edit { margin-left: 42px; }

.frame h4 {
  display: flex;
  flex-direction: column;
  justify-content: flex-end;
  margin-bottom: 11px;
  font-size: 7px;
  line-height: 10px;
  font-weight: 500;
  white-space: nowrap;
}

.row-two h4 { min-height: 20px; }
.row-three h4 { min-height: 30px; }

/* phone screens */

.screen {
  display: flex;
  flex-direction: column;
  height: 153px;
  overflow: hidden;
  background: var(--screen);
  box-shadow: inset 0 0 0 1px #fafafa;
  color: var(--ink);
  font-size: 2px;
  line-height: 4px;
}

.screen-155 { height: 155px; }
.screen-168 { height: 168px; }
.screen-190 { height: 190px; }
.screen-198 { height: 198px; }
.screen-220 { height: 221px; }
.screen-239 { height: 239px; }
.screen-262 { height: 262px; }

.white { background: #fff; }
.dim { background: #a6a6a6; box-shadow: none; }
.lit .status { background: var(--screen); }
.raised { padding-bottom: 8px; }

.screen svg {
  flex: none;
  width: 3px;
  height: 3px;
  fill: none;
  stroke: currentColor;
  stroke-width: 2;
  vertical-align: middle;
}

.status {
  display: flex;
  flex: none;
  align-items: center;
  justify-content: space-between;
  height: 11px;
  padding: 0 4px 0 7px;
  color: #000;
  font-size: 3px;
  font-weight: 600;
}

.island {
  width: 22px;
  height: 7px;
  margin-left: 4px;
  border-radius: 4px;
  background: #000;
}

.screen .status svg {
  width: 15px;
  height: 4px;
  stroke: none;
}

.homebar {
  flex: none;
  width: 24px;
  height: 1px;
  margin: 4px auto 2px;
  background: #555;
}

.body {
  display: flex;
  flex: 1;
  flex-direction: column;
  min-height: 0;
  padding: 0 3px 6px;
}

.snug { padding-bottom: 2px; }
.clip { overflow: hidden; padding-bottom: 0; }
.screen[data-tab] .body { overflow: hidden; padding-bottom: 0; }
.body > * { flex-shrink: 0; }

.push { margin-top: auto; }
.gap-top { margin-top: 4px; }
.center { text-align: center; }
.right { text-align: right; }
.nowrap { white-space: nowrap; margin-left: -3px; margin-right: -3px; }
.nowrap-text { white-space: nowrap; }

.screen a { color: inherit; }
.screen a.plain { text-decoration: none; }

.screen svg.back {
  width: 4px;
  height: 4px;
  margin: 2px 0;
}

.logo {
  width: 8px;
  height: 8px;
  margin: 7px 0 3px;
  border: 1px solid #999;
  border-radius: 50%;
  background: linear-gradient(90deg, #888, #ddd);
}

.done {
  width: 10px;
  height: 10px;
  margin: 3px 0 4px;
  border-radius: 50%;
  background: #fff;
  line-height: 8px;
  text-align: center;
}

.title {
  padding-bottom: 1px;
  font-size: 5px;
  line-height: 8px;
  font-weight: 300;
}

.title-top { padding: 2px 0; }

.step {
  padding: 3px 0 2px;
  font-size: 4px;
  line-height: 5px;
  font-weight: 300;
}

.step-page { padding: 1px 0 3px; }

.question {
  font-size: 4px;
  line-height: 7px;
  font-weight: 300;
}

.hero {
  padding-top: 5px;
  font-size: 8px;
  line-height: 12px;
  font-weight: 300;
}

.steps {
  padding-top: 3px;
  font-size: 4px;
  line-height: 7px;
  font-weight: 300;
}

label {
  display: block;
  padding-bottom: 2px;
}

.first { padding-top: 6px; }

input, textarea, select, button {
  min-width: 0;
  margin: 0;
  padding: 0;
  border: 0;
  background: none;
  color: inherit;
  font: inherit;
}

input:not([type="checkbox"]) {
  flex: 1;
  width: 100%;
  height: 5px;
}

select { appearance: none; }

::placeholder { color: #bbb; }

.field, .screen input.field {
  display: flex;
  align-items: center;
  gap: 2px;
  width: 100%;
  height: 9px;
  padding: 0 3px;
  border-radius: 2px;
  background: #fff;
}

textarea {
  display: block;
  width: 100%;
  height: 14px;
  padding: 2px;
  border: 1px solid #bbb;
  border-radius: 2px;
  background: #fff;
  resize: none;
  overflow: hidden;
}

.essay { height: 30px; margin-top: 3px; }
.essay-tight { margin-top: 1px; }

.btn {
  height: 9px;
  border-radius: 5px;
  background: var(--ink);
  color: #fff;
  text-align: center;
}

.btn-off { background: #bbb; }

.under {
  margin: 5px 0 7px;
  text-align: center;
}

.nav {
  display: flex;
  align-items: center;
  justify-content: space-between;
}

.pill {
  width: 14px;
  height: 9px;
  border-radius: 5px;
  background: var(--ink);
  color: #fff;
}

.pill-wide { width: 19px; }
.pill-off { background: #bbb; }

.round {
  display: flex;
  flex: none;
  align-items: center;
  justify-content: center;
  width: 8px;
  height: 8px;
  border: 1px solid #ddd;
  border-radius: 50%;
  font-style: normal;
}

.avatar {
  flex: none;
  width: 8px;
  height: 8px;
  border-radius: 50%;
  background: conic-gradient(#333, #999, #444, #bbb, #333);
}

.head {
  display: flex;
  align-items: center;
  gap: 2px;
  padding: 3px 0 2px;
}

.head > :first-child { flex: 1; padding-bottom: 0; }

/* crossed placeholder boxes */
.photo {
  flex: none;
  border: 1px solid #e6e6e6;
  background:
    linear-gradient(to top right, transparent calc(50% - 1px), #e2e2e2 50%, transparent calc(50% + 1px)),
    linear-gradient(to bottom right, transparent calc(50% - 1px), #e2e2e2 50%, transparent calc(50% + 1px)),
    #f1f1f1;
}

.dim .photo { filter: brightness(.66); }

.photo-short { height: 38px; }
.photo-tall { height: 100px; }
.photo-mid { height: 95px; }
.photo-box { height: 87px; margin: 3px 0 1px; }
.photo-done { height: 80px; margin: 2px 0; }
.photo-start { height: 94px; margin: 3px 0 2px; }
.photo-thumb { height: 27px; margin-bottom: 1px; }
.photo-slim { height: 16px; margin-bottom: 1px; }

.card {
  margin-bottom: 2px;
  padding: 2px 3px;
  border-radius: 2px;
  background: #fff;
}

.card em { font-style: normal; }
.vision p { height: 24px; }
.sub + .vision { padding: 3px; }
.note { min-height: 28px; }
.stack { height: 92px; margin-top: 4px; overflow: hidden; }
.stack .card { padding: 3px; }

.qa {
  display: flow-root;
  padding: 1px 3px;
}

.qa b { display: block; padding: 2px 0; }
.qa > svg { float: right; margin-top: 2px; }
.qa p { line-height: 5px; white-space: nowrap; }

.quote {
  height: 36px;
  font-size: 3px;
  line-height: 6px;
  font-weight: 300;
  text-align: center;
}

.quote i {
  display: block;
  height: 7px;
  font-size: 8px;
  line-height: 12px;
}

.quote svg { float: right; }

.day, .switch {
  display: flex;
  align-items: center;
  justify-content: space-between;
}

.day { padding: 1px 0 4px; }
.quote + .day { padding-top: 2px; }

.switch {
  width: 29px;
  height: 9px;
  border-radius: 5px;
  background: #fff;
}

.switch button {
  flex: 1;
  height: 8px;
  border-radius: 4px;
  color: #888;
}

.switch button.on {
  background: var(--ink);
  color: #fff;
}

.switch-full { width: 100%; }
.dim .switch { background: #adadad; }

.todo { list-style: none; }

.todo li {
  display: flex;
  align-items: center;
  gap: 2px;
  padding-bottom: 1px;
}

.todo i {
  flex: none;
  width: 8px;
  height: 8px;
  border: 1px solid #ddd;
  border-radius: 50%;
  font-style: normal;
  line-height: 6px;
  text-align: center;
}

.todo .ok i {
  border-color: #333;
  background: #333;
  color: #fff;
}

.todo .ok i::before { content: "\2713"; }

.todo span {
  flex: 1;
  height: 8px;
  padding: 2px 3px;
  border-radius: 2px;
  background: #fff;
}

.todo .tall { height: 11px; }
.todo em { float: right; font-style: normal; }

progress {
  display: block;
  width: 100%;
  height: 1px;
  appearance: none;
  border: 0;
}

.todo progress { margin-top: 1px; }
progress::-webkit-progress-bar { background: #ddd; }
progress::-webkit-progress-value { background: #666; }

.track {
  display: flex;
  align-items: center;
  gap: 2px;
  padding: 2px 0 5px;
}

.track progress { height: 2px; }

.add {
  display: block;
  align-self: center;
  width: 52px;
  height: 8px;
  margin: 0 auto;
  border: 1px solid #bbb;
  border-radius: 4px;
}

.add-small { align-self: flex-start; width: 24px; margin: 2px 0 0; }

.sub {
  display: flex;
  align-items: center;
  gap: 2px;
  height: 8px;
  margin-top: 2px;
}

.sub-flush { margin-top: 0; }
.sub svg + svg { margin-left: auto; }

.chips {
  display: flex;
  flex-wrap: wrap;
  gap: 2px;
  padding-top: 5px;
  list-style: none;
}

.chips li {
  height: 7px;
  padding: 0 3px;
  border: 1px solid #fff;
  border-radius: 4px;
  background: #fff;
  line-height: 5px;
}

.chips .on { border-color: #999; font-weight: 600; }
.chips .plus { border-color: #bbb; background: none; }
.dim .chips li { border-color: #adadad; background: #adadad; }
.dim .chips .on { border-color: #777; }

.alerts { list-style: none; }

.alerts li {
  display: flex;
  align-items: center;
  gap: 4px;
  height: 10px;
  margin-bottom: 2px;
  padding: 0 5px 0 4px;
  border-radius: 1px;
}

.alerts .new { background: #fff; }
.alerts .day-name { height: 4px; padding: 0; }
.alerts .last { height: 4px; margin: 0; }

.focus {
  display: flex;
  align-items: center;
  gap: 2px;
  height: 15px;
  padding: 0 2px;
}

.focus p { flex: 1; }
.focus .photo { width: 12px; height: 12px; }

.empty {
  display: flex;
  flex-direction: column;
  align-items: center;
  gap: 1px;
  padding: 4px;
  text-align: center;
}

.empty .photo { width: 8px; height: 8px; }
.empty .add { align-self: center; }

.thumbs, .tiles {
  display: grid;
  grid-template-columns: repeat(4, 1fr);
  gap: 1px;
  padding: 3px 0 4px;
  text-align: center;
}

.thumbs .photo { display: block; height: 10px; }

.tiles {
  grid-template-columns: 1fr 1fr;
  gap: 2px;
  padding: 5px 0 1px;
  text-align: left;
}

.tiles .card {
  height: 50px;
  margin: 0;
  padding: 2px;
  border: 1px solid #fff;
}

.tiles .card.on { border-color: #aaa; }
.tiles .photo { display: block; height: 27px; margin-bottom: 1px; }
.tiles + .add { margin-top: 0; }

.steps-list { list-style: none; line-height: 7px; }

.steps-list li {
  display: flex;
  align-items: center;
  justify-content: space-between;
}

.sheet {
  flex: none;
  padding: 1px 3px;
  border-radius: 4px 4px 0 0;
  background: #fff;
}

.sheet + .homebar, .keyboard + .homebar { display: none; }

.sheet-add { height: 42px; }
.sheet-details { height: 88px; }
.sheet-details label { padding-top: 4px; }
.sheet-details textarea { border-color: #eee; height: 22px; }
.sheet-details .head { font-size: 4px; padding: 1px 0; }
.schedule { font-size: 3px; }

.sheet-goal {
  display: flex;
  flex-direction: column;
  height: 116px;
  padding: 1px 6px 2px;
}

.screen-155 .sheet-goal { height: 118px; }
.sheet-goal .field { border: 1px solid #ddd; }
.sheet-goal label { padding-bottom: 4px; }
.sheet-goal textarea { height: 22px; border-color: #eee; }

.grip {
  display: block;
  width: 7px;
  height: 1px;
  margin: 0 auto 2px;
  background: #bbb;
}

.sheet-goal .grip { margin: 3px auto 4px; }
.sheet-goal .btn-text { background: none; color: var(--ink); margin-top: 1px; }

.boxed {
  margin: 1px 0;
  padding: 2px;
  border: 1px solid #eee;
  border-radius: 2px;
}

.period { display: flex; gap: 1px; padding: 1px 0 3px; }

.period button {
  flex: 1;
  height: 9px;
  border: 1px solid #ddd;
  border-radius: 5px;
}

.period .on { border-color: #666; }

.sheet-goal .toggle {
  display: flex;
  align-items: center;
  justify-content: space-between;
  padding-bottom: 2px;
}

.toggle input {
  display: flex;
  justify-content: flex-end;
  width: 11px;
  height: 6px;
  appearance: none;
  border: 1px solid #333;
  border-radius: 3px;
  background: #333;
}

.toggle input::after {
  content: "";
  width: 4px;
  height: 4px;
  border-radius: 50%;
  background: #fff;
}

/* on-screen keyboard */

.keyboard {
  display: flex;
  flex: none;
  flex-direction: column;
  gap: 2px;
  height: 57px;
  padding: 1px;
  background: #ced4de;
  color: #111;
  font-size: 4px;
  line-height: 8px;
  text-align: center;
}

.keyboard div { display: flex; gap: 1px; }
.keyboard .mid { padding: 0 4px; }
.keyboard .words, .keyboard .fn { font-size: 3px; }
.keyboard .words { line-height: 6px; }
.keyboard .words span, .keyboard .keys span { flex: 1; }
.keyboard .keys span { height: 8px; border-radius: 1px; background: #fff; }
.keyboard .keys .grey { background: #abb3c0; }
.keyboard .keys .space { flex: 2; }
.keyboard .tools { justify-content: space-between; padding: 0 3px; }
.screen .keyboard svg { width: 5px; height: 5px; }

.keyed .keyboard { height: 58px; }

.keyed .homebar {
  display: block;
  width: 100%;
  height: 3px;
  margin: 0;
  border: solid #ced4de;
  border-width: 0 24px 2px;
}

/* tab bar */

.tabs {
  display: flex;
  flex: none;
  justify-content: space-around;
  height: 13px;
  padding-top: 2px;
  background: #fff;
  color: #888;
  text-align: center;
}

.tabs + .homebar {
  margin: 0;
  width: 100%;
  height: 5px;
  border: solid #fff;
  border-width: 2px 24px;
}

.tabs svg { display: block; margin: 0 auto 1px; }
.tabs .on { color: #111; font-weight: 600; }

.notes { list-style: none; }

.notes li {
  height: 27px;
  padding: 3px;
  border-bottom: 1px solid #eee;
}

/* progress report */

.head small { font-size: 2px; }

.days {
  display: flex;
  justify-content: space-between;
  padding: 3px 2px;
}

.month {
  padding: 1px 0 2px;
  font-size: 3px;
  line-height: 6px;
}

.picker {
  display: flex;
  justify-content: space-between;
  width: 32px;
  margin: 0 auto;
  padding: 1px 0 3px;
}

.report .card {
  height: 25px;
  padding: 2px 3px;
  line-height: 5px;
}

.report .card progress { height: 2px; margin: 2px 0 3px; }
.report .card em { float: right; padding: 0 1px; background: #ddd; }

/* profile */

.profile {
  display: flex;
  align-items: center;
  gap: 3px;
  height: 11px;
  margin: 2px 0;
}

.profile .round:first-child { width: 11px; height: 11px; background: #fff; border-color: #fff; }
.profile p { flex: 1; }
.section { margin: 1px 0; }
.line { display: flex; align-items: center; justify-content: space-between; height: 9px; }
.settings { padding: 0 3px; }
.logout { background: #ddd; }
.plan { padding: 3px; }
.plan .add { width: 100%; margin-top: 4px; }
.plan .btn { display: block; width: 100%; }

.benefit {
  display: flex;
  align-items: center;
  gap: 3px;
  margin-top: 1px;
}

.price {
  display: flex;
  align-items: center;
  gap: 2px;
  margin: 1px 0 2px;
}

.price b { font-size: 5px; line-height: 7px; }
.price :last-child { margin-left: auto; }
.dates { display: grid; grid-template-columns: 19px 27px 17px; gap: 0 1px; }
```

FILE: script.js
```js
const icon = name => `<svg><use href="#i-${name}"/></svg>`;

const texts = {
  vision: "My vision is to lead a life filled with balance, where I prioritize strong relationships, personal growth, and maintaining my health. I will nurture my creativity and embrace new learning opportunities, while striving for financial freedom and inner peace.",
  physical: "I am healthy and strong, I maintain a healthy diet and get plenty of sleep. I weigh under 200 lbs. I have enough energy to play with my boys and the dog."
};

document.querySelectorAll("[data-text]").forEach(el => {
  el.textContent = texts[el.dataset.text];
});

const chipSets = {
  values: "Integrity,Growth,*Compassion,Accountability,Honesty,Creativity,*Independence,Resilience,*Leadership,Empathy,*Adventure,Learning,Kindness,Confidence,*Family,Courage,Gratitude,Spirituality,Courage,Balance,*Curiosity",
  desires: "Physical Freedom,Financial Growth,Strong Relationships,Building a Legacy,Career Success,Personal Growth,Good Health,Lifelong Learning,Inner Peace,Making a Difference,Freedom of Time,Adventure and Exploration,Work Life Balance,Self Confidence,Mental Well-being,Becoming a Leader,Giving Back to Society",
  grateful: "Family,Good Health,Friendship,A Comfortable Home,Personal Growth,A Steady Job,Safety and Resilience,Mind and Education,Supportive Community,Freedom,Love and Relationships,Food on the Table,Personal Independence,Opportunities to Learn,Inner Peace,Acts of Kindness,Physical Mobility"
};

const row = (keys, cls = "") => `<div class="keys ${cls}">` + [...keys].map(k => `<span>${k}</span>`).join("") + "</div>";

document.querySelectorAll(".keyboard").forEach(el => {
  el.innerHTML = `<div class="words"><span>"The"</span><span>the</span><span>to</span></div>`
    + row("qwertyuiop") + row("asdfghjkl", "mid")
    + `<div class="keys"><span class="grey">&#8679;</span>` + [..."zxcvbnm"].map(k => `<span>${k}</span>`).join("") + `<span class="grey">&#9003;</span></div>`
    + `<div class="keys fn"><span class="grey">123</span><span class="space">space</span><span class="grey">return</span></div>`
    + `<div class="tools">${icon("smile")}${icon("mic")}</div>`;
});

document.querySelectorAll("[data-set]").forEach(el => {
  const chips = chipSets[el.dataset.set].split(",");
  if (el.dataset.extra) chips.push("*" + el.dataset.extra);
  el.innerHTML = chips.map(c => c[0] === "*" ? `<li class="on">${c.slice(1)}</li>` : `<li>${c}</li>`).join("")
    + `<li class="plus">+ Add More</li>`;
});

document.querySelectorAll("[data-list]").forEach(el => {
  el.innerHTML = `<ul class="todo">
      <li><i>1</i><span class="tall">Exercise <em>1/3 Weekly</em><progress max="4" value="1"></progress></span>${icon("more")}</li>
      <li><i></i><span>6000 steps <em>2/3 Weekly</em></span>${icon("more")}</li>
      <li><i></i><span>7 hours of sleep <em>4/5 Weekly</em></span>${icon("more")}</li>
    </ul>
    <button class="add">+ Add Goal</button>
    <b class="sub">${icon("action")} Completed Goal</b>
    <ul class="todo wide">
      <li class="ok"><i></i><span>Read for 15 minutes</span></li>
      <li class="ok"><i></i><span>Play outdoor for 15 minutes</span></li>
    </ul>`;
});

// question summary, the listed ones are open
const answers = [
  ["What brings you the most joy or satisfaction in life?", "Compassion &nbsp; Independence &nbsp; Leadership<br>Adventure &nbsp; Family"],
  ["Think about your future. What are your top aspirations and desires?", "Family &nbsp; Strong Relationships &nbsp; Career Success<br>Personal Growth &nbsp; Lifelong Learning &nbsp; Inner Peace<br>Making a Difference &nbsp; Freedom of Time<br>Adventure and Exploration &nbsp; Self Confidence<br>Mental Well-being"],
  ["What are you grateful for in your life?", "Busy Time Management &nbsp; Good Health<br>A Comfortable Home &nbsp; Personal Growth<br>A Steady Job &nbsp; Safety and Resilience<br>Supportive Community &nbsp; Freedom<br>Love and Relationships &nbsp; Food on the Table"],
  ["What are you core values?", "Compassion &nbsp; Independence &nbsp; Leadership<br>Adventure &nbsp; Family"],
  ["Picture yourself in 5 years, what does your life look like? What are you biggest accomplishments and what kind of person have you become?", "Thriving in my career, living in my dream home,<br>traveling the world, healthy and balanced"]
];

document.querySelectorAll("[data-answers]").forEach(el => {
  const open = el.dataset.answers.split(" ");
  el.innerHTML = answers.map(([question, answer], n) =>
    `<div class="card qa">${icon("down")}<b>${question}</b>`
    + (open.includes(String(n)) ? `<p>${answer}</p><p>${icon("edit")} Edit</p>` : "") + "</div>").join("");
});

// focus area picker
const areas = {
  Physical: "Focus on your health, fitness, and overall well-being",
  Spiritual: "Deepen your connection to your beliefs and inner peace",
  Financial: "Improve your financial stability, savings, and investments",
  Intellectual: "Expand your knowledge, skills, and creative growth",
  Relationships: "Strengthen your connections with family and loved ones",
  Service: "Contribute to your community and making positive impact"
};

document.querySelectorAll("[data-focus]").forEach(el => {
  const picked = el.dataset.focus.split(" ");
  el.innerHTML = `<div class="body snug"><svg class="back"><use href="#i-back"/></svg>
    <p class="question nowrap-text">What do you want to focus on?</p><p>Select the 3 areas of your life and try to improve</p>
    <div class="tiles">` + Object.keys(areas).map(a =>
      `<div class="card${picked.includes(a) ? " on" : ""}"><i class="photo"></i><b>${a}</b><p>${areas[a]}</p></div>`).join("")
    + `</div><button class="add add-small">+ Add a Focus Area</button>
    <div class="nav push"><span>Select 3 to 6 focus areas</span><button class="pill pill-wide${picked.length > 2 ? "" : " pill-off"}">Complete</button></div></div>`;
});

// goal and task sheets
document.querySelectorAll("[data-form]").forEach(el => {
  el.innerHTML = `<i class="grip"></i><p class="step">${el.dataset.form}</p>
    <label>Action <input class="field" type="text" value="${el.dataset.value}"></label>
    <label>Frequency <input class="field" type="text" value="1"></label>
    <div class="period"><button class="on">Daily</button><button>Weekly</button><button>Monthly</button><button>Yearly</button></div>`
    + ["Set as reoccurring", "Add to daily goal tracking", "Include in progress reporting"].map(t =>
      `<label class="toggle">${t} <input type="checkbox" checked></label>`).join("")
    + `<button class="btn push">Save</button><button class="btn btn-text">Cancel</button>`;
});

document.querySelectorAll("[data-task]").forEach(el => {
  el.innerHTML = `<i class="grip"></i><p class="step">${el.dataset.task}</p>
    <label>Name <input class="field" type="text" value="Type here"></label>
    <label>Notes <textarea placeholder="Add a note"></textarea></label>
    <p>Frequency</p>
    <div class="period"><button class="on">None</button><button>Daily</button><button>Weekly</button><button>Monthly</button></div>
    <button class="btn push">Save</button><button class="btn btn-text">Cancel</button>`;
});

document.querySelectorAll("[data-report]").forEach(el => {
  const kind = el.dataset.report;
  const rows = kind === "physical" ? [["Exercise daily", 70], ["Sleep", 30]] : [["Exercise daily", 50], ["Sleep", 40], ["Reach for less screen time", 65]];
  el.innerHTML = `<div class="body">`
    + (kind === "physical" ? "" : `<div class="head"><p class="title">Progress</p><small>October 2024 ${icon("down")}</small></div>`)
    + `<div class="switch switch-full"><button class="${kind === "year" ? "" : "on"}">MONTHLY</button><button class="${kind === "year" ? "on" : ""}">YEARLY</button></div>
    <div class="days"><b>All</b><span>Physical</span><span>Spiritual</span><span>Service</span><span>Finance</span></div>
    <p class="month">October 2024</p>
    <div class="picker">${icon("back")}<b>October</b>${icon("next")}</div>
    <div class="report">`
    + rows.map(([name, value]) =>
      `<div class="card">${name}<progress max="100" value="${value}"></progress>Goal met <em>Details</em></div>`).join("") + "</div></div>";
});

document.querySelectorAll("[data-profile]").forEach(el => {
  const free = el.dataset.profile === "free";
  const line = (i, text, end) => `<div class="line"><span>${icon(i)} ${text}</span>${end}</div>`;
  el.innerHTML = `<svg class="back"><use href="#i-back"/></svg><p class="question">My profile</p>
    <div class="profile"><i class="round">JD</i><p><b>John Doe</b><br>johndoe@email.com</p><i class="round">${icon("edit")}</i></div>
    <p class="section">Subscription</p><div class="card plan">`
    + (free
      ? `<p class="question">Free Subscription</p><b>Subscribe and enjoy</b>`
        + `<p class="benefit">${icon("check")}<span>Lorem ipsum dolor sit amet, consectetur adipiscing elit, sed do eiusmod</span></p>`.repeat(3)
        + `<p class="price">Only <b>$13</b> /month <span>Yearly $130</span></p><button class="btn">Subscribe now</button>`
      : `<p>Premium Subscription<br>Renews on <b>04 Mar 2025</b></p><button class="add">Manage Subscription</button>`)
    + `</div><p class="section">Security</p><div class="card settings">${line("lock", "Reset Password", icon("next"))}</div>
    <p class="section">Notifications</p><div class="card settings">${line("bell", "Turn on App notifications", icon("more"))}</div>
    <p class="section">Others</p><div class="card settings">${line("help", "Help & Support", icon("next"))}${line("notes", "Legal information", icon("next"))}</div>
    <div class="card settings logout">${line("back", "Log out", "")}</div>`;
});

// every screen gets the phone chrome
document.querySelectorAll(".screen").forEach(el => {
  el.insertAdjacentHTML("afterbegin", `<div class="status"><span>9:41</span><i class="island"></i>${icon("signal")}</div>`);
  if (el.dataset.tab) {
    el.insertAdjacentHTML("beforeend", `<div class="tabs">` + ["Vision", "Action", "Home", "Progress", "Notes"].map(t =>
      `<span class="${t === el.dataset.tab ? "on" : ""}">${icon(t.toLowerCase())}${t}</span>`).join("") + "</div>");
  }
  el.insertAdjacentHTML("beforeend", `<i class="homebar"></i>`);
});
```
